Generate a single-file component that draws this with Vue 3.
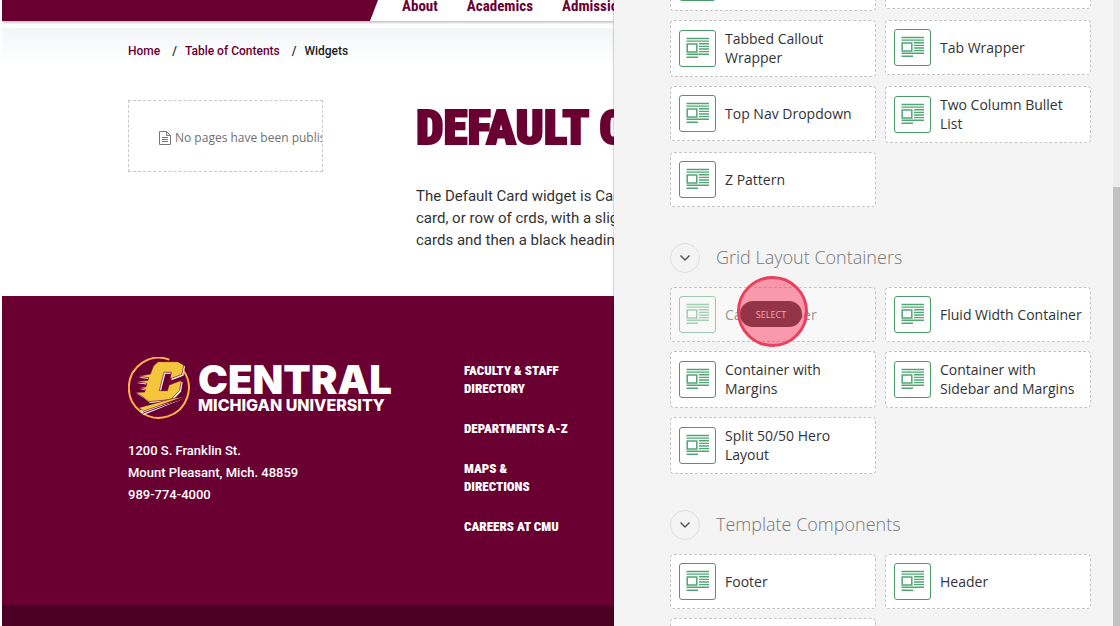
<template>
  <div class="page">
    <div class="site">
      <header class="site-header">
        <div class="brand-bar"></div>
        <nav class="main-nav">
          <a v-for="link in navLinks" :key="link" href="#">{{ link }}</a>
        </nav>
      </header>

      <nav class="breadcrumb" aria-label="Breadcrumb">
        <a href="#">Home</a>
        <span class="slash">/</span>
        <a href="#">Table of Contents</a>
        <span class="slash">/</span>
        <span>Widgets</span>
      </nav>

      <main class="content">
        <aside class="empty-pages">
          <svg width="12" height="14" viewBox="0 0 12 14" fill="none" stroke="#777">
            <path d="M.5.5h7l4 4v9H.5zM7.500.5v4h4M3 6.500h6M3 8.500h6M3 10.500h6" />
          </svg>
          <span>No pages have been published</span>
        </aside>
        <article class="article">
          <h1>DEFAULT CARD</h1>
          <p>
            The Default Card widget is Card<br />
            card, or row of crds, with a slight<br />
            cards and then a black heading
          </p>
        </article>
      </main>

      <footer class="site-footer">
        <div class="footer-main">
          <div class="contact">
            <a href="#" class="logo">
              <svg width="62" height="62" viewBox="0 0 186 186">
                <path d="M165 39A90 90 0 1 1 124 8" fill="none" stroke="#fdb04a" stroke-width="6" />
                <path class="logo-shade" :d="logoC" transform="translate(4 4)" />
                <path class="logo-fill" :d="logoC" />
                <path class="logo-shade" d="m36 160 100-26 34-10-124 50z" />
                <path class="logo-fill" d="m32 152 104-28 32-5-122 44z" />
                <path d="m44 169 122-45" stroke="#6a0032" stroke-width="3" />
              </svg>
              <span class="logo-text">
                <span class="logo-name">CENTRAL</span>
                <span class="logo-sub">MICHIGAN UNIVERSITY</span>
              </span>
            </a>
            <address>
              1200 S. Franklin St.<br />
              Mount Pleasant, Mich. 48859<br />
              989-774-4000
            </address>
          </div>
          <ul class="footer-links">
            <li v-for="link in footerLinks" :key="link"><a href="#">{{ link }}</a></li>
          </ul>
        </div>
        <div class="footer-strip"></div>
      </footer>
    </div>

    <div class="panel">
      <div class="panel-body">
        <section v-for="section in sections" :key="section.id" class="section">
          <h2 v-if="section.title" class="section-title">
            <button class="toggle" :aria-label="'Toggle ' + section.title">
              <svg width="12" height="8" viewBox="0 0 12 8" fill="none" stroke="#555" stroke-width="1.500">
                <path d="m1.500 1.500 4.500 4.500 4.500-4.500" />
              </svg>
            </button>
            <span>{{ section.title }}</span>
          </h2>
          <div class="widgets">
            <div
              v-for="widget in section.widgets"
              :key="widget"
              class="widget"
              :class="{ hovered: widget === hovered }"
            >
              <svg class="widget-icon" viewBox="0 0 37 37" fill="none" stroke="#4fa673">
                <rect x=".5" y=".5" width="36" height="36" rx="2.500" stroke="#4a9a6a" />
                <path
                  d="M7.500 8.500H30M7.500 11.100H30M20 13.800h10M20 16.400h10M20 19h10M20 21.600h10M7.500 24.300H30M7.500 27.200H19"
                  stroke-width="1.400"
                />
                <path d="M8.200 14.100h9.600v7.800H8.200z" stroke-width="1.500" />
              </svg>
              <span class="widget-label">{{ widget }}</span>
              <button v-if="widget === hovered" class="select-btn">SELECT</button>
              <span v-if="widget === hovered" class="click-mark"></span>
            </div>
          </div>
        </section>
      </div>
      <div class="scrollbar"><div class="thumb"></div></div>
    </div>
  </div>
</template>

<script setup>
import { ref } from "vue";

const navLinks = ["About", "Academics", "Admissions"];

const footerLinks = [
  "FACULTY & STAFF DIRECTORY",
  "DEPARTMENTS A-Z",
  "MAPS & DIRECTIONS",
  "CAREERS AT CMU",
];

// Action C with the speed lines on its left side
const logoC =
  "M76 27 90 14H150L167 24 162 52 126 66 130 46H108L94 101H118L123 84 160 70 155 100 128 128 62 134 " +
  "42 118 22 106 50 105 52 97 32 92 54 89 57 79 22 74 60 70 62 62 28 58 67 51Z";

const hovered = ref("Card Wrapper");

const sections = [
  {
    id: "widgets",
    widgets: [
      "Social Media Feed and Links",
      "Slider",
      "Tabbed Callout Wrapper",
      "Tab Wrapper",
      "Top Nav Dropdown",
      "Two Column Bullet List",
      "Z Pattern",
    ],
  },
  {
    id: "grid",
    title: "Grid Layout Containers",
    widgets: [
      "Card Wrapper",
      "Fluid Width Container",
      "Container with Margins",
      "Container with Sidebar and Margins",
      "Split 50/50 Hero Layout",
    ],
  },
  {
    id: "template",
    title: "Template Components",
    widgets: ["Footer", "Header", "Navigation"],
  },
];
</script>

<style>
body {
  margin: 0;
  overflow: hidden;
}
</style>

<style scoped>
.page {
  display: grid;
  grid-template-columns: 307fr 253fr;
  height: 100vh;
  overflow: hidden;
  background: #fff;
  font-family: "Open Sans", "Noto Sans", sans-serif;
}
a {
  color: inherit;
  text-decoration: none;
}
.site {
  display: flex;
  flex-direction: column;
  min-width: 0;
  margin-left: 2px;
  overflow: hidden;
  white-space: nowrap;
  font-family: Roboto, sans-serif;
}
.site-header {
  display: flex;
  flex: none;
  height: 21px;
  box-shadow: 0 1px 3px rgba(0, 0, 0, 0.35);
}
.brand-bar {
  flex: none;
  width: 376px;
  background: #6a0032;
  clip-path: polygon(0 0, 100% 0, calc(100% - 8px) 100%, 0 100%);
}
.main-nav {
  display: flex;
  gap: 29px;
  padding-left: 24px;
  color: #6a0032;
  font-family: "Roboto Condensed", Roboto, sans-serif;
  font-size: 15px;
  font-weight: 700;
  line-height: 12px;
}
.breadcrumb {
  display: flex;
  flex: none;
  gap: 12px;
  margin-top: 7px;
  padding: 13px 0 17px 126px;
  background: linear-gradient(#f3f6f7, #fff 38px);
  color: #6a0032;
  font-size: 12px;
  font-weight: 500;
  line-height: 20px;
}
.slash {
  margin-right: -4px;
}
.slash,
.breadcrumb span {
  color: #1c1c1c;
}
.content {
  display: flex;
  flex: none;
  align-items: flex-start;
  gap: 93px;
  height: 196px;
  padding: 22px 0 0 126px;
}
.empty-pages {
  box-sizing: border-box;
  display: flex;
  flex: none;
  align-items: center;
  gap: 4px;
  width: 195px;
  height: 72px;
  padding: 3px 0 0 30px;
  overflow: hidden;
  border: 1px dashed #c8c8c8;
  color: #707070;
  font-family: "Open Sans", "Noto Sans", sans-serif;
  font-size: 12px;
}
.empty-pages svg {
  flex: none;
}
h1 {
  margin: 0 0 30px;
  color: #6a0032;
  font-family: "Roboto Condensed", Roboto, sans-serif;
  font-size: 49px;
  font-weight: 900;
  line-height: 55px;
  -webkit-text-stroke: 2px #6a0032;
}
.article p {
  margin: 0;
  color: #333;
  font-size: 15px;
  line-height: 22px;
}
.site-footer {
  display: flex;
  flex: 1;
  flex-direction: column;
  background: #6a0032;
  color: #fff;
}
.footer-main {
  display: flex;
  flex: 1;
  padding: 61px 0 0 126px;
}
.contact {
  flex: none;
  width: 336px;
}
.logo {
  display: flex;
  gap: 8px;
}
.logo-text {
  display: flex;
  flex-direction: column;
  padding-top: 6px;
  font-family: Inter, sans-serif;
  font-weight: 900;
}
.logo-name {
  font-size: 40px;
  line-height: 34px;
}
.logo-sub {
  font-size: 16px;
  font-weight: 800;
  line-height: 16px;
}
address {
  margin-top: 21px;
  font-size: 13px;
  font-style: normal;
  font-weight: 500;
  line-height: 22px;
}
.footer-links {
  display: flex;
  flex-direction: column;
  gap: 22px;
  width: 108px;
  margin: 0;
  padding: 5px 0 0;
  list-style: none;
  white-space: normal;
  font-family: "Roboto Condensed", Roboto, sans-serif;
  font-size: 13px;
  font-weight: 900;
  line-height: 18px;
}
.footer-strip {
  height: 21px;
  background: #4b0023;
}
.logo-fill {
  fill: #f5c53c;
  stroke: #6a0032;
  stroke-width: 2px;
}
.logo-shade {
  fill: #fff;
}
.panel {
  display: flex;
  min-width: 0;
  overflow: hidden;
  background: #f4f4f4;
  box-shadow: -1px 0 1px rgba(0, 0, 0, 0.15);
}
.panel-body {
  flex: 1;
  min-width: 0;
  margin-top: -46px;
  padding: 0 22px 0 56px;
}
.section-title {
  display: flex;
  align-items: center;
  gap: 16px;
  margin: 0;
  padding: 36px 0 14px;
  color: #777;
  font-size: 18px;
  font-weight: 300;
  line-height: 30px;
}
.section-title span {
  padding-bottom: 2px;
  line-height: 28px;
}
.toggle {
  display: flex;
  align-items: center;
  justify-content: center;
  width: 30px;
  height: 30px;
  padding: 0;
  border: 1px solid #e0e0e0;
  border-radius: 50%;
  background: none;
}
.widgets {
  display: grid;
  grid-template-columns: 1fr 1fr;
  align-items: start;
  gap: 9px;
}
.widget {
  position: relative;
  display: flex;
  align-items: center;
  gap: 9px;
  padding: 8px;
  border: 1px dashed #c4c4c4;
  border-radius: 4px;
  background: #fff;
}
.widget-icon {
  flex: none;
  width: 37px;
  height: 37px;
}
.widget-label {
  padding-bottom: 1px;
  color: #333;
  font-size: 14px;
  line-height: 19px;
}
.hovered {
  background: #f8f8f8;
}
.hovered .widget-icon,
.hovered .widget-label {
  opacity: 0.5;
}
.select-btn {
  position: absolute;
  top: 13px;
  left: 50%;
  width: 62px;
  height: 26px;
  margin-left: -33px;
  padding: 0;
  border: none;
  border-radius: 13px;
  background: #2e2e2e;
  color: #fff;
  font-family: inherit;
  font-size: 9px;
}
.click-mark {
  position: absolute;
  top: -12px;
  left: 50%;
  box-sizing: border-box;
  width: 71px;
  height: 71px;
  margin-left: -36px;
  border: 3px solid #e8415f;
  border-radius: 50%;
  background: rgba(247, 60, 95, 0.5);
}
.scrollbar {
  flex: none;
  width: 7px;
  background: #ececec;
}
.thumb {
  height: 100%;
  margin-top: 187px;
  background: #c1c1c1;
}
</style>
